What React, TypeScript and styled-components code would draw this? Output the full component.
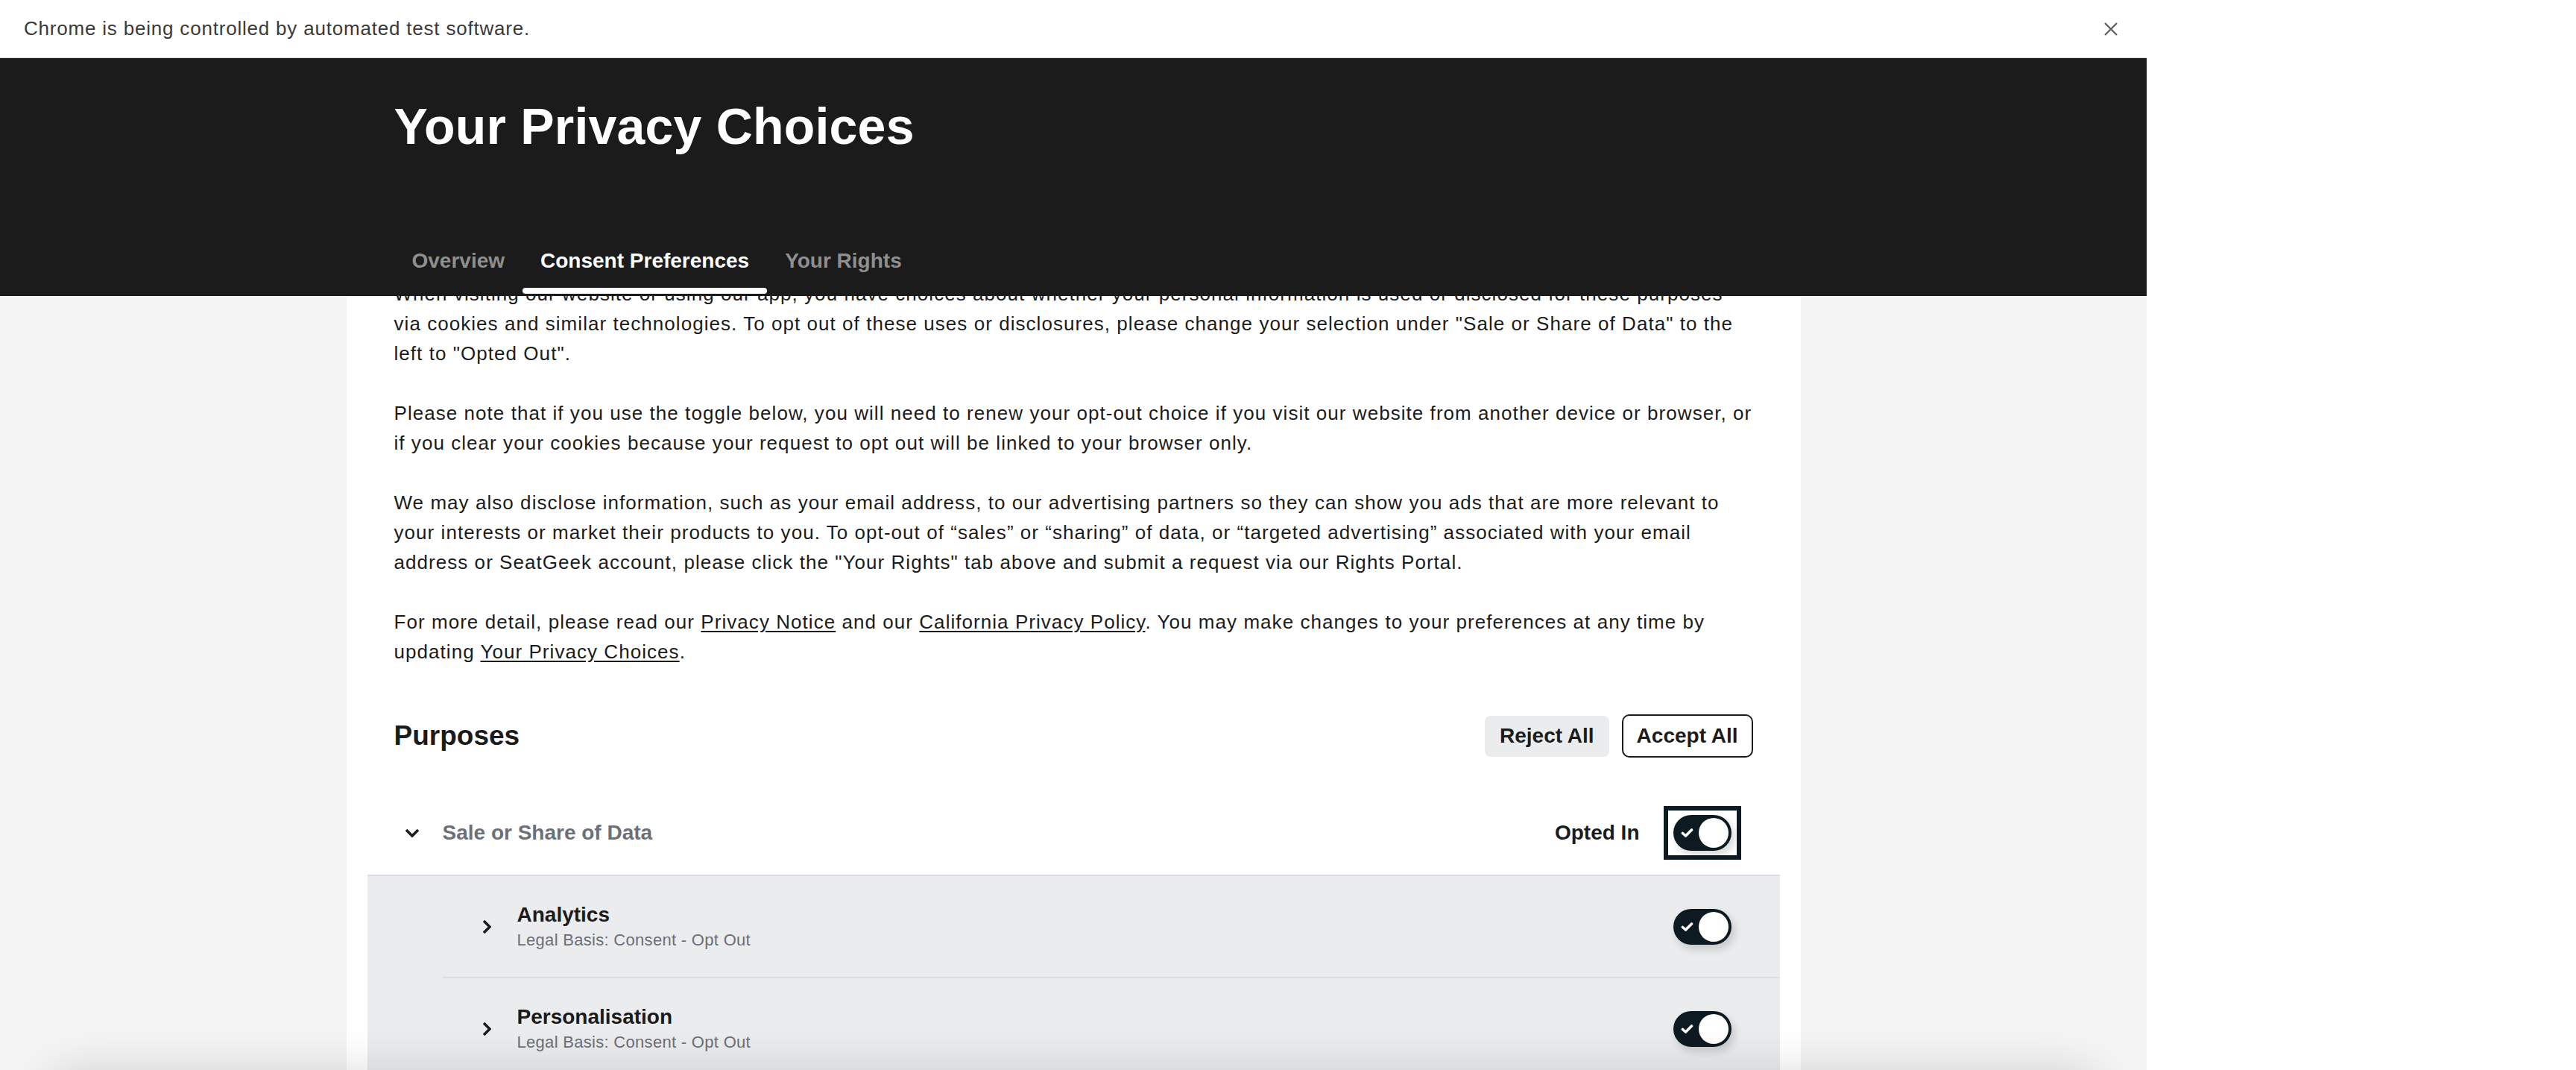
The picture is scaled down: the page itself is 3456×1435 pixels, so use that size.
import React from "react";
import styled, { createGlobalStyle } from "styled-components";

const GlobalStyle = createGlobalStyle`
  html, body { margin: 0; padding: 0; background: #fefefe; }
  * { box-sizing: border-box; }
`;

const Frame = styled.div`
  width: 2880px;
  height: 1435px;
  display: flex;
  flex-direction: column;
  background: #f4f4f4;
  overflow: hidden;
  font-family: "Liberation Sans", Arial, Helvetica, sans-serif;
  color: #1b1b1b;
`;

const Infobar = styled.div`
  height: 78px;
  flex-shrink: 0;
  background: #ffffff;
  border-bottom: 1px solid #d6d6d6;
  display: flex;
  align-items: center;
  justify-content: space-between;
  padding: 0 38px 0 32px;
`;

const InfoText = styled.span`
  font-size: 26px;
  letter-spacing: 0.8px;
  color: #3a3a3a;
`;

const CloseButton = styled.button`
  border: 0;
  background: transparent;
  padding: 0;
  display: flex;
  align-items: center;
  justify-content: center;
  width: 20px;
  height: 20px;
`;

const Viewport = styled.div`
  flex: 1;
  position: relative;
  overflow: hidden;
`;

const Header = styled.header`
  position: absolute;
  top: 0;
  left: 0;
  right: 0;
  z-index: 2;
  background: #1b1b1b;
  padding: 51px 0 3px;
`;

const Container = styled.div`
  width: 1951px;
  margin: 0 auto;
  padding: 0 64px;
`;

const Title = styled.h1`
  margin: 0 0 124px;
  font-size: 68px;
  line-height: 80px;
  font-weight: 700;
  letter-spacing: 0.2px;
  color: #ffffff;
`;

const Tabs = styled.nav`
  display: flex;
`;

const Tab = styled.div<{ $active?: boolean }>`
  display: flex;
  flex-direction: column;
  padding: 0 24px;
  font-size: 28px;
  line-height: 34px;
  font-weight: 700;
  color: ${(p) => (p.$active ? "#ffffff" : "#8f8f8f")};
`;

const TabIndicator = styled.span<{ $active?: boolean }>`
  display: block;
  height: 8px;
  margin: 19px -24px 0;
  border-radius: 4px;
  background: ${(p) => (p.$active ? "#ffffff" : "transparent")};
`;

const Card = styled.main`
  width: 1951px;
  min-height: 100%;
  margin: 0 auto;
  background: #ffffff;
  padding: 296px 64px 0;
`;

const Paragraph = styled.p`
  margin: 0 0 40px;
  font-size: 26px;
  line-height: 40px;
  letter-spacing: 1.05px;
  color: #1b1b1b;
`;

const Link = styled.a`
  color: inherit;
  text-decoration: underline;
  text-underline-offset: 3px;
`;

const PurposesHeader = styled.div`
  margin-top: 64px;
  height: 58px;
  display: flex;
  align-items: center;
  justify-content: space-between;
`;

const SectionTitle = styled.h2`
  margin: 0;
  font-size: 37px;
  line-height: 44px;
  font-weight: 700;
`;

const ButtonGroup = styled.div`
  display: flex;
  align-items: center;
  gap: 17px;
`;

const Button = styled.button<{ $variant: "soft" | "outline" }>`
  font-family: inherit;
  font-size: 28px;
  font-weight: 700;
  color: #1b1b1b;
  cursor: pointer;
  ${(p) =>
    p.$variant === "soft"
      ? `height: 55px; padding: 0 20px; background: #ebecee; border: 0; border-radius: 8px;`
      : `height: 58px; padding: 0 18px; background: #ffffff; border: 2px solid #1b1b1b; border-radius: 10px;`}
`;

const Accordion = styled.section`
  margin: 45px -36px 0;
`;

const MainRow = styled.div`
  height: 114px;
  display: flex;
  align-items: center;
  padding: 0 52px 0 36px;
  border-bottom: 2px solid #dcdde0;
`;

const IconBox = styled.span`
  width: 48px;
  flex-shrink: 0;
  display: flex;
  align-items: center;
  justify-content: center;
`;

const RowTitle = styled.span<{ $muted?: boolean }>`
  margin-left: 17px;
  font-size: 28px;
  line-height: 34px;
  font-weight: 700;
  color: ${(p) => (p.$muted ? "#6b7078" : "#1b1b1b")};
`;

const Spacer = styled.span`
  flex: 1;
`;

const Status = styled.span`
  font-size: 28px;
  font-weight: 700;
  margin-right: 32px;
`;

const FocusRing = styled.span`
  display: inline-flex;
  padding: 6px 7px;
  border: 6px solid #0d1a21;
`;

const Track = styled.span`
  width: 78px;
  height: 48px;
  border-radius: 24px;
  background: #0d1a21;
  display: flex;
  align-items: center;
  justify-content: space-between;
  padding: 0 4px 0 10px;
  box-shadow: 4px 6px 12px rgba(0, 0, 0, 0.16);
  flex-shrink: 0;
`;

const Knob = styled.span`
  width: 40px;
  height: 40px;
  border-radius: 50%;
  background: #ffffff;
`;

const SubList = styled.div`
  background: #ebecee;
  padding-left: 100px;
`;

const SubRow = styled.div`
  height: 137px;
  display: flex;
  align-items: center;
  padding: 0 65px 0 36px;
  border-bottom: 2px solid #dcdde0;
`;

const SubText = styled.div`
  display: flex;
  flex-direction: column;
`;

const LegalBasis = styled.span`
  margin-left: 17px;
  margin-top: 3px;
  font-size: 22px;
  line-height: 28px;
  letter-spacing: 0.3px;
  color: #6b7078;
`;

const BottomShadow = styled.div`
  position: absolute;
  left: 60px;
  right: 60px;
  bottom: -90px;
  height: 90px;
  border-radius: 45px;
  background: #ffffff;
  box-shadow: 0 0 60px rgba(0, 0, 0, 0.14);
  z-index: 3;
`;

const CloseIcon = () => (
  <svg width="20" height="20" viewBox="0 0 20 20" fill="none">
    <path d="M2 2 L18 18 M18 2 L2 18" stroke="#5f6368" strokeWidth="2.4" />
  </svg>
);

const ChevronDown = () => (
  <svg width="20" height="13" viewBox="0 0 20 13" fill="none">
    <polyline points="2,2 10,10 18,2" stroke="#1b1b1b" strokeWidth="3.6" />
  </svg>
);

const ChevronRight = () => (
  <svg width="12" height="20" viewBox="0 0 12 20" fill="none">
    <polyline points="2,2 10,10 2,18" stroke="#1b1b1b" strokeWidth="3.6" />
  </svg>
);

const Check = () => (
  <svg width="17" height="12" viewBox="0 0 17 12" fill="none">
    <polyline
      points="2.5,6.5 6.5,10 14.5,2"
      stroke="#ffffff"
      strokeWidth="3.6"
      strokeLinecap="round"
      strokeLinejoin="round"
    />
  </svg>
);

const Toggle = () => (
  <Track role="switch" aria-checked="true">
    <Check />
    <Knob />
  </Track>
);

const subPurposes = [
  { title: "Analytics", basis: "Legal Basis: Consent - Opt Out" },
  { title: "Personalisation", basis: "Legal Basis: Consent - Opt Out" },
];

export default function App() {
  return (
    <>
      <GlobalStyle />
      <Frame>
        <Infobar>
          <InfoText>Chrome is being controlled by automated test software.</InfoText>
          <CloseButton aria-label="Close">
            <CloseIcon />
          </CloseButton>
        </Infobar>
        <Viewport>
          <Header>
            <Container>
              <Title>Your Privacy Choices</Title>
              <Tabs>
                <Tab>
                  Overview
                  <TabIndicator />
                </Tab>
                <Tab $active>
                  Consent Preferences
                  <TabIndicator $active />
                </Tab>
                <Tab>
                  Your Rights
                  <TabIndicator />
                </Tab>
              </Tabs>
            </Container>
          </Header>
          <Card>
            <Paragraph>
              When visiting our website or using our app, you have choices about whether your personal
              information is used or disclosed for these purposes via cookies and similar technologies. To
              opt out of these uses or disclosures, please change your selection under "Sale or Share of
              Data" to the left to "Opted Out".
            </Paragraph>
            <Paragraph>
              Please note that if you use the toggle below, you will need to renew your opt-out choice if you
              visit our website from another device or browser, or if you clear your cookies because your
              request to opt out will be linked to your browser only.
            </Paragraph>
            <Paragraph>
              We may also disclose information, such as your email address, to our advertising partners so
              they can show you ads that are more relevant to your interests or market their products to you.
              To opt-out of “sales” or “sharing” of data, or “targeted advertising” associated with your email
              address or SeatGeek account, please click the "Your Rights" tab above and submit a request via
              our Rights Portal.
            </Paragraph>
            <Paragraph>
              For more detail, please read our <Link>Privacy Notice</Link> and our{" "}
              <Link>California Privacy Policy</Link>. You may make changes to your preferences at any time by
              updating <Link>Your Privacy Choices</Link>.
            </Paragraph>
            <PurposesHeader>
              <SectionTitle>Purposes</SectionTitle>
              <ButtonGroup>
                <Button $variant="soft">Reject All</Button>
                <Button $variant="outline">Accept All</Button>
              </ButtonGroup>
            </PurposesHeader>
            <Accordion>
              <MainRow>
                <IconBox>
                  <ChevronDown />
                </IconBox>
                <RowTitle $muted>Sale or Share of Data</RowTitle>
                <Spacer />
                <Status>Opted In</Status>
                <FocusRing>
                  <Toggle />
                </FocusRing>
              </MainRow>
              <SubList>
                {subPurposes.map((s) => (
                  <SubRow key={s.title}>
                    <IconBox>
                      <ChevronRight />
                    </IconBox>
                    <SubText>
                      <RowTitle>{s.title}</RowTitle>
                      <LegalBasis>{s.basis}</LegalBasis>
                    </SubText>
                    <Spacer />
                    <Toggle />
                  </SubRow>
                ))}
              </SubList>
            </Accordion>
          </Card>
          <BottomShadow />
        </Viewport>
      </Frame>
    </>
  );
}
